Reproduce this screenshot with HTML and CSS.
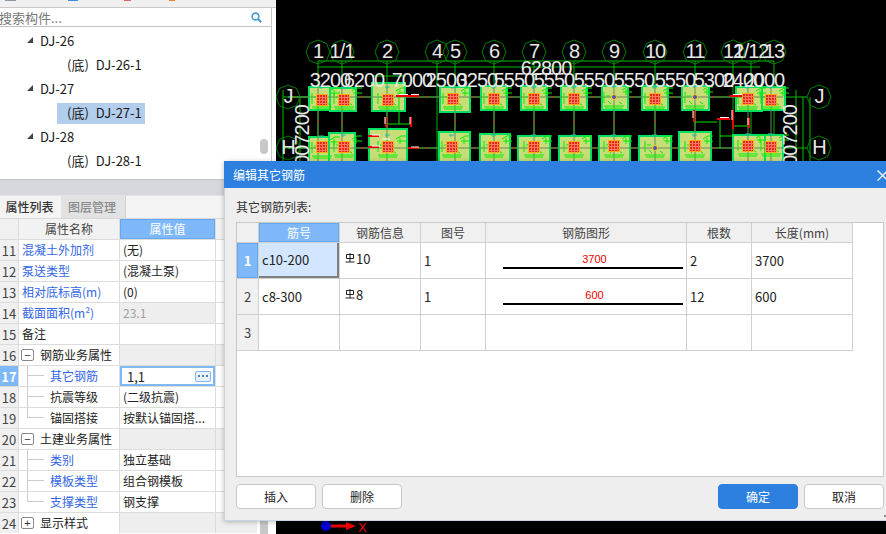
FILE: index.html
```html
<!DOCTYPE html>
<html lang="zh">
<head>
<meta charset="utf-8">
<title>编辑其它钢筋</title>
<link rel="stylesheet" href="styles.css">
</head>
<body>
<div class="desktop">
  <aside class="left">
    <div class="toolstrip"><i class="tb tb-gray"></i><i class="tb tb-blue"></i><i class="tb tb-red"></i><i class="tb tb-orange"></i></div>
    <div class="search">
      <span class="search-text">搜索构件...</span>
      <svg class="search-icon" width="11" height="11" viewBox="0 0 11 11"><circle cx="4.5" cy="4.5" r="3.4" fill="none" stroke="#4a9ad0" stroke-width="1.6"/><path d="M7 7l3.2 3.2" stroke="#4a9ad0" stroke-width="2"/></svg>
    </div>
    <div class="tree">
      <div class="tree-row parent"><i class="tri"></i>DJ-26</div>
      <div class="tree-row child"><span class="leaf">(底)<b>DJ-26-1</b></span></div>
      <div class="tree-row parent"><i class="tri"></i>DJ-27</div>
      <div class="tree-row child"><span class="leaf sel">(底)<b>DJ-27-1</b></span></div>
      <div class="tree-row parent"><i class="tri"></i>DJ-28</div>
      <div class="tree-row child"><span class="leaf">(底)<b>DJ-28-1</b></span></div>
      <i class="thumb thumb-tree"></i>
    </div>
    <div class="split"></div>
    <div class="tabs"><span class="tab on">属性列表</span><span class="tab off">图层管理</span></div>
    <div class="props">
      <div class="pc pn"></div><div class="pc ph">属性名称</div><div class="pc ph active">属性值</div><div class="pc ph"></div>

      <div class="pc pn">11</div><div class="pc link">混凝土外加剂</div><div class="pc">(无)</div><div class="pc"></div>
      <div class="pc pn">12</div><div class="pc link">泵送类型</div><div class="pc">(混凝土泵)</div><div class="pc"></div>
      <div class="pc pn">13</div><div class="pc link">相对底标高(m)</div><div class="pc">(0)</div><div class="pc"></div>
      <div class="pc pn">14</div><div class="pc link">截面面积(m²)</div><div class="pc grey muted">23.1</div><div class="pc"></div>
      <div class="pc pn">15</div><div class="pc">备注</div><div class="pc"></div><div class="pc"></div>
      <div class="pc pn">16</div><div class="pc grp"><i class="box">−</i>钢筋业务属性</div><div class="pc grey"></div><div class="pc grey"></div>
      <div class="pc pn hot">17</div><div class="pc kid link">其它钢筋</div><div class="pc editing">1,1<span class="more"><i></i><i></i><i></i></span></div><div class="pc"></div>
      <div class="pc pn">18</div><div class="pc kid">抗震等级</div><div class="pc">(二级抗震)</div><div class="pc"></div>
      <div class="pc pn">19</div><div class="pc kid last">锚固搭接</div><div class="pc">按默认锚固搭...</div><div class="pc"></div>
      <div class="pc pn">20</div><div class="pc grp"><i class="box">−</i>土建业务属性</div><div class="pc grey"></div><div class="pc grey"></div>
      <div class="pc pn">21</div><div class="pc kid link">类别</div><div class="pc">独立基础</div><div class="pc"></div>
      <div class="pc pn">22</div><div class="pc kid link">模板类型</div><div class="pc">组合钢模板</div><div class="pc"></div>
      <div class="pc pn">23</div><div class="pc kid last link">支撑类型</div><div class="pc">钢支撑</div><div class="pc"></div>
      <div class="pc pn">24</div><div class="pc grp"><i class="box">+</i>显示样式</div><div class="pc grey"></div><div class="pc grey"></div>
    </div>
    <i class="thumb thumb-props"></i>
  </aside>

  <main class="canvas">
    <svg class="cad" width="610" height="534" viewBox="276 0 610 534">
      <defs>
        <g id="hatch">
          <rect x="-5.5" y="-5.5" width="11" height="11" fill="#e82818" stroke="#ffb400" stroke-width="1"/>
          <path d="M-5.5-2.500h11M-5.500.5h11M-5.500 3.500h11M-2.500-5.500v11M.5-5.500v11M3.500-5.500v11" stroke="#ff7a60" stroke-width="1"/>
        </g>
        <g id="dot">
          <circle r="2.500" fill="#5050c0" stroke="#ffd000" stroke-width="1"/>
        </g>
        <g id="marks" fill="none" stroke="#00f000" stroke-width="1">
          <path d="M-10-7v11M-8-3h4M-10 7h20M-9 9h18M8-9l5-3h5M9-7h9M12-10v6M-6 2l3 3M5 3l3 2"/>
          <path d="M-3-13h5M-1-13v2" stroke="#20c0a0"/>
        </g>
      </defs>

      <g class="axis">
        <path d="M318 61H774M318 67H760"/>
        <path d="M283 90V165M300 97V165M796 90V165M810 97V165M803 97V165M283 97H310M283 148H310M783 97H807M783 148H807M372 76H406"/>
      </g>
      <g class="grid-lines">
        <path d="M318 61V161M342 61V161M387 61V161M437 61V161M455 61V161M494 61V161M534 61V161M574 61V161M614 61V161M655 61V161M695 61V161M733 61V161M751 61V161M774 61V161"/>
        <path d="M288 97H783M288 148H783"/>
      </g>
      <g class="bubbles">
        <polygon points="330,52 326.500,60.500 318,64 309.500,60.500 306,52 309.500,43.500 318,40 326.500,43.500"/>
        <polygon points="354,52 350.500,60.500 342,64 333.500,60.500 330,52 333.500,43.500 342,40 350.500,43.500"/>
        <polygon points="399,52 395.500,60.500 387,64 378.500,60.500 375,52 378.500,43.500 387,40 395.500,43.500"/>
        <polygon points="449,52 445.500,60.500 437,64 428.500,60.500 425,52 428.500,43.500 437,40 445.500,43.500"/>
        <polygon points="467,52 463.500,60.500 455,64 446.500,60.500 443,52 446.500,43.500 455,40 463.500,43.500"/>
        <polygon points="506,52 502.500,60.500 494,64 485.500,60.500 482,52 485.500,43.500 494,40 502.500,43.500"/>
        <polygon points="546,52 542.500,60.500 534,64 525.500,60.500 522,52 525.500,43.500 534,40 542.500,43.500"/>
        <polygon points="586,52 582.500,60.500 574,64 565.500,60.500 562,52 565.500,43.500 574,40 582.500,43.500"/>
        <polygon points="626,52 622.500,60.500 614,64 605.500,60.500 602,52 605.500,43.500 614,40 622.500,43.500"/>
        <polygon points="667,52 663.500,60.500 655,64 646.500,60.500 643,52 646.500,43.500 655,40 663.500,43.500"/>
        <polygon points="707,52 703.500,60.500 695,64 686.500,60.500 683,52 686.500,43.500 695,40 703.500,43.500"/>
        <polygon points="745,52 741.500,60.500 733,64 724.500,60.500 721,52 724.500,43.500 733,40 741.500,43.500"/>
        <polygon points="763,52 759.500,60.500 751,64 742.500,60.500 739,52 742.500,43.500 751,40 759.500,43.500"/>
        <polygon points="786,52 782.500,60.500 774,64 765.500,60.500 762,52 765.500,43.500 774,40 782.500,43.500"/>
        <polygon points="300,97 296.500,105.500 288,109 279.500,105.500 276,97 279.500,88.500 288,85 296.500,88.500"/>
        <polygon points="300,148 296.500,156.500 288,160 279.500,156.500 276,148 279.500,139.500 288,136 296.500,139.500"/>
        <polygon points="831,97 827.500,105.500 819,109 810.500,105.500 807,97 810.500,88.500 819,85 827.500,88.500"/>
        <polygon points="831,148 827.500,156.500 819,160 810.500,156.500 807,148 810.500,139.500 819,136 827.500,139.500"/>
      </g>

      <g class="foot">
        <rect x="309" y="87" width="21" height="23"/><rect x="330" y="88" width="26" height="23"/>
        <rect x="372" y="83" width="33" height="28"/>
        <rect x="440" y="87" width="30" height="25"/><rect x="481" y="86" width="26" height="24"/>
        <rect x="521" y="86" width="26" height="24"/><rect x="561" y="86" width="26" height="24"/>
        <rect x="602" y="86" width="26" height="24"/><rect x="642" y="86" width="26" height="24"/>
        <rect x="682" y="86" width="27" height="24"/><rect x="736" y="87" width="26" height="24"/>
        <rect x="762" y="87" width="23" height="23"/>
        <rect x="309" y="137" width="24" height="30"/><rect x="329" y="133" width="26" height="30"/>
        <rect x="369" y="129" width="38" height="34"/>
        <rect x="439" y="132" width="31" height="32"/><rect x="480" y="134" width="30" height="30"/>
        <rect x="518" y="136" width="32" height="28"/><rect x="559" y="136" width="32" height="28"/>
        <rect x="599" y="136" width="31" height="28"/><rect x="639" y="136" width="32" height="28"/>
        <rect x="679" y="132" width="32" height="32"/><rect x="733" y="135" width="32" height="28"/>
        <rect x="765" y="135" width="18" height="28"/>
      </g>
      <g class="lines-over">
        <path d="M288 97H783M288 148H783M318 87V161M342 87V161M387 83V161M455 87V161M494 86V161M534 86V161M574 86V161M614 86V161M655 86V161M695 86V161M748 87V161M771 87V161"/>
      </g>
      <path class="ticks" d="M360 97h4M424 97h3M472 97h3M510 97h3M552 97h3M592 97h3M632 97h3M672 97h3M712 97h3M360 148h4M424 148h3M472 148h3M512 148h3M553 148h3M593 148h3M633 148h3M673 148h3M713 148h3M318 120v3M342 120v3M455 120v3M494 120v3M534 120v3M574 120v3M614 120v3M655 120v3"/>
      <use href="#marks" x="322" y="100"/><use href="#marks" x="344" y="100"/><use href="#marks" x="388" y="100"/>
      <use href="#marks" x="453" y="100"/><use href="#marks" x="494" y="100"/><use href="#marks" x="534" y="100"/>
      <use href="#marks" x="574" y="100"/><use href="#marks" x="614" y="99"/><use href="#marks" x="655" y="100"/>
      <use href="#marks" x="695" y="99"/><use href="#marks" x="748" y="100"/><use href="#marks" x="771" y="100"/>
      <use href="#marks" x="322" y="149"/><use href="#marks" x="344" y="148"/><use href="#marks" x="388" y="148"/>
      <use href="#marks" x="452" y="148"/><use href="#marks" x="494" y="148"/><use href="#marks" x="534" y="148"/>
      <use href="#marks" x="574" y="148"/><use href="#marks" x="614" y="148"/><use href="#marks" x="655" y="148"/>
      <use href="#marks" x="695" y="148"/><use href="#marks" x="748" y="147"/><use href="#marks" x="771" y="147"/>

      <use href="#hatch" x="322" y="100"/><use href="#hatch" x="344" y="100"/><use href="#hatch" x="388" y="100"/>
      <use href="#hatch" x="453" y="99"/><use href="#hatch" x="494" y="99"/><use href="#hatch" x="534" y="99"/>
      <use href="#hatch" x="574" y="99"/><use href="#dot" x="614" y="97"/><use href="#hatch" x="655" y="99"/>
      <use href="#dot" x="695" y="97"/><use href="#hatch" x="748" y="99"/><use href="#hatch" x="771" y="100"/>
      <use href="#hatch" x="322" y="147"/><use href="#hatch" x="344" y="147"/><use href="#hatch" x="388" y="147"/>
      <use href="#hatch" x="452" y="147"/><use href="#hatch" x="494" y="147"/><use href="#hatch" x="534" y="147"/>
      <use href="#hatch" x="574" y="147"/><use href="#hatch" x="614" y="146"/><use href="#dot" x="655" y="148"/>
      <use href="#hatch" x="695" y="146"/><use href="#hatch" x="748" y="146"/><use href="#hatch" x="771" y="147"/>

      <path class="beam" d="M386 117V127M411 117V127M399 95V124M386 124H411M694 122H717M720 118V148M720 136H733M733 126H749"/>
      <path class="red-mark" d="M396 96h12M408 96h11M386 117v10M411 117v10M368 136h11M368 147h11M408 148h11M730 96h12M694 110v12M717 119h13M733 110v19M749 118v10"/>
      <path class="white-mark" d="M399 94.500h9M411 94.500h8M385 117v7M410 117v7M372 135h8M372 146h8M411 147h8M733 94.500h9M693 111v7M720 117.500h9M732 110v10M748 118v7M382 139h8"/>

      <g class="cad-text">
        <text x="318" y="58">1</text><text x="342" y="58">1/1</text><text x="387" y="58">2</text>
        <text x="437" y="58">4</text><text x="455" y="58">5</text><text x="494" y="58">6</text>
        <text x="534" y="58">7</text><text x="574" y="58">8</text><text x="614" y="58">9</text>
        <text x="655" y="58">10</text><text x="695" y="58">11</text><text x="733" y="58">12</text>
        <text x="751" y="58">1/12</text><text x="774" y="58">13</text>
        <text x="546" y="75">62800</text>
        <text x="330" y="87">3200</text><text x="364" y="87">6200</text><text x="412" y="87">7000</text>
        <text x="446" y="87">2500</text><text x="477" y="87">3250</text><text x="514" y="87">5550</text>
        <text x="554" y="87">5550</text><text x="594" y="87">5550</text><text x="634" y="87">5550</text>
        <text x="675" y="87">5550</text><text x="714" y="87">5300</text><text x="743" y="87">2400</text>
        <text x="764" y="87">2000</text>
        <text x="288" y="103">J</text><text x="288" y="154">H</text>
        <text x="819" y="103">J</text><text x="819" y="154">H</text>
        <text class="vert" transform="translate(309 105) rotate(-90)">007200</text>
        <text class="vert" transform="translate(797 105) rotate(-90)">007200</text>
      </g>

      <g class="origin">
        <path class="x-arrow" d="M330 524.500H346V522L356 526L346 530V527.500H330Z"/>
        <circle cx="326" cy="526" r="5"/>
        <text x="358" y="532">X</text>
      </g>
    </svg>
  </main>

  <section class="dialog">
    <header class="dlg-title"><span>编辑其它钢筋</span><span class="dlg-close">×</span></header>
    <div class="dlg-body">
      <div class="dlg-label">其它钢筋列表:</div>
      <div class="sheet">
        <div class="sgrid">
          <div class="sc sh"></div><div class="sc sh sh-on">筋号</div><div class="sc sh">钢筋信息</div><div class="sc sh">图号</div><div class="sc sh">钢筋图形</div><div class="sc sh">根数</div><div class="sc sh">长度(mm)</div>

          <div class="sc rn rn-on">1</div><div class="sc cur">c10-200</div>
          <div class="sc info"><svg class="rebar" width="10" height="10" viewBox="0 0 10 10"><path d="M1.500 1.500h7v4h-7zM5 0v9M.5 9h9" fill="none" stroke="#222" stroke-width="1"/></svg>10</div>
          <div class="sc">1</div>
          <div class="sc shape"><span class="dim">3700</span><i class="bar"></i></div>
          <div class="sc">2</div><div class="sc">3700</div>

          <div class="sc rn">2</div><div class="sc">c8-300</div>
          <div class="sc info"><svg class="rebar" width="10" height="10" viewBox="0 0 10 10"><path d="M1.500 1.500h7v4h-7zM5 0v9M.5 9h9" fill="none" stroke="#222" stroke-width="1"/></svg>8</div>
          <div class="sc">1</div>
          <div class="sc shape"><span class="dim">600</span><i class="bar"></i></div>
          <div class="sc">12</div><div class="sc">600</div>

          <div class="sc rn">3</div><div class="sc"></div><div class="sc"></div><div class="sc"></div><div class="sc"></div><div class="sc"></div><div class="sc"></div>
        </div>
      </div>
      <div class="dlg-actions">
        <button class="btn">插入</button>
        <button class="btn">删除</button>
        <span class="spacer"></span>
        <button class="btn primary">确定</button>
        <button class="btn">取消</button>
      </div>
      <i class="grip"></i>
    </div>
  </section>
</div>
</body>
</html>
```
FILE: styles.css
```css
* { box-sizing: border-box; }
html, body { margin: 0; padding: 0; }
body { background: #000; font: 12px/1 "Noto Sans CJK SC", "Open Sans", sans-serif; color: #222; }
.desktop { position: relative; display: flex; width: 886px; height: 534px; overflow: hidden; }

.left { position: relative; display: flex; flex-direction: column; width: 276px; height: 534px; background: #fff; overflow: hidden; }
.toolstrip { display: flex; height: 8px; background: #f0f0f0; border-bottom: 1px solid #c8c8c8; }
.tb { display: block; height: 1px; }
.tb-gray { width: 11px; margin-left: 5px; background: #8a9aa8; }
.tb-blue { width: 10px; margin-left: 52px; background: #3f8ee0; }
.tb-red { width: 7px; margin-left: 46px; background: #e06060; }
.tb-orange { width: 6px; margin-left: 38px; background: #f08030; }

.search { display: flex; align-items: center; justify-content: space-between; height: 19px; padding-right: 9px; border-bottom: 1px solid #c4c4c4; border-right: 1px solid #c8c8c8; margin-right: 4px; background: #fff; }
.search-text { color: #777; font-size: 13px; margin-left: -1px; }
.search-icon { display: block; }

.tree { position: relative; height: 153px; padding-top: 2px; margin-right: 4px; border-right: 1px solid #c8c8c8; border-bottom: 1px solid #c4c4c4; }
.tree-row { display: flex; align-items: center; height: 24px; color: #1a1a1a; font-size: 13px; white-space: nowrap; }
.parent { padding: 0 0 2px 27px; }
.tri { display: block; width: 0; height: 0; margin-right: 7px; border-left: 6px solid transparent; border-bottom: 6px solid #444; }
.child { padding-left: 57px; }
.leaf { display: flex; align-items: center; height: 21px; padding: 0 0 2px 10px; width: 88px; }
.leaf b { font-weight: 400; margin-left: 7px; }
.leaf.sel { background: #b3cdec; }
.thumb { position: absolute; display: block; width: 8px; background: #c8c8c8; border-radius: 4px; }
.thumb-tree { left: 260px; top: 112px; height: 15px; }
.thumb-props { left: 260px; top: 518px; height: 20px; }

.split { height: 15px; background: #d5d7dd; }
.tabs { display: flex; height: 24px; background: #f4f4f4; border-bottom: 1px solid #d8d8d8; border-top: 1px solid #e4e4e4; }
.tab { display: flex; align-items: center; justify-content: center; height: 22px; padding-right: 2px; font-size: 12px; }
.tab.on { width: 61px; color: #333; font-weight: 500; background: #f4f4f4; }
.tab.off { width: 65px; color: #8a8a8a; font-weight: 500; background: #e2e2e2; border-right: 1px solid #d0d0d0; }

.props { display: grid; grid-template-columns: 18px 100px 95px 41px; grid-auto-rows: 20px; gap: 1px; width: 257px; background: #dcdcdc; border-right: 1px solid #dcdcdc; }
.pc { display: flex; align-items: center; position: relative; padding-left: 3px; background: #fff; color: #222; white-space: nowrap; overflow: hidden; font-size: 12px; }
.pn { justify-content: center; padding: 0; background: #f0f0f0; color: #444; font-size: 13px; }
.pn.hot { background: #7eb8f8; color: #fff; font-weight: 700; }
.ph { justify-content: center; padding: 0; background: #f2f2f2; color: #444; }
.ph.active { background: #7eb8f8; color: #fff; border: 1px solid #66a8f0; }
.link { color: #3366e6; }
.grey { background: #eeeeee; }
.muted { color: #a0a0a0; }
.pc.grp { padding-left: 2px; }
.box { display: flex; flex: none; align-items: center; justify-content: center; width: 13px; height: 12px; margin-right: 6px; border: 1px solid #888; border-radius: 2px; background: #fff; font: normal 11px/1 "Liberation Sans", sans-serif; color: #333; }
.pc.kid { padding-left: 31px; }
.kid::before { content: ""; position: absolute; left: 8px; top: 9px; width: 17px; height: 1px; background: #ccc; }
.kid::after { content: ""; position: absolute; left: 8px; top: -1px; bottom: -1px; width: 1px; background: #ccc; }
.kid.last::after { bottom: 10px; }
.pc.editing { border: 2px solid #7eb8f8; padding-left: 5px; font-size: 13px; color: #222; justify-content: space-between; }
.more { display: flex; align-items: center; justify-content: center; gap: 2px; flex: none; width: 16px; height: 11px; margin-right: 2px; border: 1px solid #7eb8f8; border-radius: 2px; background: #e8f1fc; }
.more i { display: block; width: 2px; height: 2px; background: #4a7fc0; }

.canvas { flex: 1; background: #000; min-width: 0; }
.cad { display: block; }
.axis path { fill: none; stroke: #00c000; stroke-width: 1; }
.grid-lines path { fill: none; stroke: #00b000; stroke-width: 1; }
.bubbles polygon { fill: none; stroke: #008000; stroke-width: 1; }
.foot rect { fill: #c8dc78; stroke: #00e060; stroke-width: 2; }
.lines-over path { fill: none; stroke: #6a8a58; stroke-width: 1; }
.ticks { fill: none; stroke: #c03010; stroke-width: 1; }
.beam { fill: none; stroke: #00e000; stroke-width: 1; }
.red-mark { fill: none; stroke: #f00000; stroke-width: 2; }
.white-mark { fill: none; stroke: #fff; stroke-width: 1; }
.cad-text text { fill: #e8e8e8; font: 20px "Liberation Sans", sans-serif; letter-spacing: -1px; text-anchor: middle; }
.cad-text .vert { text-anchor: end; }
.origin circle { fill: #0000d0; }
.x-arrow { fill: #f00000; }
.origin text { fill: #f00000; font: 13px "Liberation Sans", sans-serif; }

.dialog { position: absolute; left: 224px; top: 161px; width: 662px; height: 360px; display: flex; flex-direction: column; background: #eee; border: 1px solid #c8d4e4; border-top: 0; border-right: 0; box-shadow: 0 1px 5px rgba(0, 0, 0, .25); }
.dlg-title { display: flex; align-items: center; justify-content: space-between; flex: none; height: 27px; margin-left: -1px; padding-left: 9px; background: #2d7fe0; color: #fff; font-size: 12px; }
.dlg-close { font-size: 17px; margin-right: -5px; }
.dlg-body { flex: 1; display: flex; flex-direction: column; padding: 0 2px 0 11px; position: relative; }
.dlg-label { height: 34px; padding-top: 13px; color: #333; font-size: 12px; }
.sheet { height: 255px; background: #fff; border: 1px solid #c8c8c8; }
.sgrid { display: inline-grid; grid-template-columns: 21px 80px 80px 64px 200px 64px 100px; grid-template-rows: 19px 35px 35px 35px; gap: 1px; padding: 0 1px 1px 0; background: #d0d0d0; vertical-align: top; }
.sc { position: relative; display: flex; align-items: center; padding-left: 3px; background: #fff; color: #222; font-size: 13px; }
.sh { justify-content: center; padding: 0; background: #f0f0f0; color: #444; font-size: 12px; }
.sh-on { background: #7eb8f8; color: #fff; border: 1px solid #66a8f0; }
.rn { justify-content: center; padding: 0; background: #f0f0f0; color: #444; }
.rn-on { background: #7eb8f8; color: #fff; font-weight: 700; border: 1px solid #66a8f0; }
.cur { background: #d2e7ff; border-right: 2px solid #808080; border-bottom: 2px solid #808080; }
.info { padding: 0 0 4px 5px; }
.rebar { display: block; margin-right: 1px; margin-top: -1px; }
.shape { display: block; padding: 0; }
.dim { position: absolute; left: 0; right: 0; top: 11px; padding-left: 17px; text-align: center; color: #f00000; font: 11px/1 "Liberation Sans", sans-serif; }
.bar { position: absolute; left: 17px; right: 3px; top: 24px; display: block; height: 2px; background: #000; }
.dlg-actions { display: flex; gap: 6px; padding-top: 7px; }
.spacer { flex: 1; }
.btn { width: 80px; height: 25px; padding: 0; background: #fff; border: 1px solid #c8c8c8; border-radius: 4px; color: #222; font: 12px/1 "Noto Sans CJK SC", sans-serif; }
.btn.primary { background: #2d7fe0; border-color: #2d7fe0; color: #fff; }
.grip { position: absolute; right: 0; bottom: 3px; display: block; width: 2px; height: 2px; background: #888; }
```
